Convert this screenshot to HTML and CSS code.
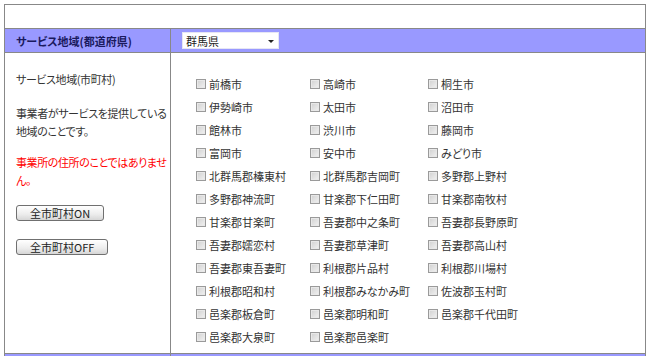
FILE: index.html
```html
<!DOCTYPE html>
<html lang="ja">
<head>
  <meta charset="UTF-8">
  <title>サービス地域</title>
  <link rel="stylesheet" href="styles.css">
</head>
<body>

<table class="area-form">
  <colgroup>
    <col class="col-label">
    <col>
  </colgroup>
  <tr class="blank-row">
    <td colspan="2"></td>
  </tr>
  <tr class="head-row">
    <th>サービス地域(都道府県)</th>
    <td>
      <div class="pref-select">
        <select id="pref">
          <option>群馬県</option>
        </select>
      </div>
    </td>
  </tr>
  <tr class="body-row">
    <td class="side">
      <p class="side-title">サービス地域(市町村)</p>
      <p class="side-note">事業者がサービスを提供している<br>地域のことです。</p>
      <p class="side-warn">事業所の住所のことではありませ<br>ん。</p>
      <button class="all-btn btn-on" id="allOn">全市町村ON</button>
      <button class="all-btn btn-off" id="allOff">全市町村OFF</button>
    </td>
    <td class="cities">
      <div class="city-grid" id="cityGrid">
        <label><input type="checkbox">前橋市</label>
        <label><input type="checkbox">高崎市</label>
        <label><input type="checkbox">桐生市</label>
        <label><input type="checkbox">伊勢崎市</label>
        <label><input type="checkbox">太田市</label>
        <label><input type="checkbox">沼田市</label>
        <label><input type="checkbox">館林市</label>
        <label><input type="checkbox">渋川市</label>
        <label><input type="checkbox">藤岡市</label>
        <label><input type="checkbox">富岡市</label>
        <label><input type="checkbox">安中市</label>
        <label><input type="checkbox">みどり市</label>
        <label><input type="checkbox">北群馬郡榛東村</label>
        <label><input type="checkbox">北群馬郡吉岡町</label>
        <label><input type="checkbox">多野郡上野村</label>
        <label><input type="checkbox">多野郡神流町</label>
        <label><input type="checkbox">甘楽郡下仁田町</label>
        <label><input type="checkbox">甘楽郡南牧村</label>
        <label><input type="checkbox">甘楽郡甘楽町</label>
        <label><input type="checkbox">吾妻郡中之条町</label>
        <label><input type="checkbox">吾妻郡長野原町</label>
        <label><input type="checkbox">吾妻郡嬬恋村</label>
        <label><input type="checkbox">吾妻郡草津町</label>
        <label><input type="checkbox">吾妻郡高山村</label>
        <label><input type="checkbox">吾妻郡東吾妻町</label>
        <label><input type="checkbox">利根郡片品村</label>
        <label><input type="checkbox">利根郡川場村</label>
        <label><input type="checkbox">利根郡昭和村</label>
        <label><input type="checkbox">利根郡みなかみ町</label>
        <label><input type="checkbox">佐波郡玉村町</label>
        <label><input type="checkbox">邑楽郡板倉町</label>
        <label><input type="checkbox">邑楽郡明和町</label>
        <label><input type="checkbox">邑楽郡千代田町</label>
        <label><input type="checkbox">邑楽郡大泉町</label>
        <label><input type="checkbox">邑楽郡邑楽町</label>
      </div>
    </td>
  </tr>
  <tr class="head-row">
    <th>&nbsp;</th>
    <td></td>
  </tr>
</table>

<script>
  const boxes = document.querySelectorAll('#cityGrid input');

  document.getElementById('allOn').addEventListener('click', () => {
    boxes.forEach(b => b.checked = true);
  });

  document.getElementById('allOff').addEventListener('click', () => {
    boxes.forEach(b => b.checked = false);
  });
</script>

</body>
</html>
```

FILE: styles.css
```css
body {
  margin: 4px;
  background: #fff;
  font-family: "Noto Sans CJK JP", "Noto Sans", sans-serif;
  font-size: 11px;
  color: #333;
  font-feature-settings: "palt";
}

.area-form {
  width: 642px;
  border-collapse: collapse;
  border: 1px solid #888;
  table-layout: fixed;
}

.area-form th,
.area-form td {
  border: 1px solid #888;
  padding: 0;
  text-align: left;
  vertical-align: middle;
}

.col-label {
  width: 166px;
}

.area-form .blank-row td {
  height: 23px;
}

.area-form .head-row th,
.area-form .head-row td {
  height: 23px;
  padding-left: 11px;
  background: #9999ff;
}

.area-form .head-row th {
  font-weight: bold;
  color: #1a1a5e;
}

.pref-select {
  position: relative;
  width: 97px;
}

.pref-select select {
  appearance: none;
  -webkit-appearance: none;
  display: block;
  width: 97px;
  height: 17px;
  margin: 0;
  padding: 0 0 0 3px;
  border: 1px solid #e6e6f4;
  background: #fff;
  font-family: inherit;
  font-size: 11px;
  color: #222;
  font-feature-settings: "palt";
}

.pref-select::after {
  content: "";
  position: absolute;
  right: 5px;
  top: 8px;
  border-left: 3px solid transparent;
  border-right: 3px solid transparent;
  border-top: 3px solid #222;
}

.area-form .side {
  vertical-align: top;
  padding: 17px 0 0 11px;
  line-height: 18px;
}

.side p {
  margin: 0;
  white-space: nowrap;
  letter-spacing: -0.4px;
}

.side .side-note {
  margin-top: 16px;
}

.side .side-warn {
  margin-top: 13px;
  color: #ff0000;
}

.all-btn {
  display: block;
  height: 16px;
  padding: 0 13px;
  border: 1px solid #707070;
  border-radius: 3px;
  background: linear-gradient(#ffffff, #ececec 60%, #d6d6d6);
  font-family: inherit;
  font-size: 11px;
  line-height: 14px;
  color: #222;
  font-feature-settings: "palt";
  cursor: pointer;
}

.side .btn-on {
  margin-top: 16px;
}

.side .btn-off {
  margin-top: 18px;
}

.area-form .cities {
  vertical-align: top;
  padding: 19px 0 5px 25px;
}

.city-grid {
  display: grid;
  grid-template-columns: 114px 118px 1fr;
  grid-auto-rows: 23px;
}

.city-grid label {
  display: flex;
  align-items: center;
  gap: 3px;
  white-space: nowrap;
}

.city-grid input {
  appearance: none;
  -webkit-appearance: none;
  width: 10px;
  height: 10px;
  margin: 0;
  border: 1px solid #9a9a9a;
  background: linear-gradient(135deg, #d0d0d0, #f2f2f2);
  box-shadow: inset 0 0 0 1px #e8e8e8;
}

.city-grid input:checked {
  box-shadow: inset 0 0 0 2px #f2f2f2, inset 0 0 0 5px #333;
}
```
